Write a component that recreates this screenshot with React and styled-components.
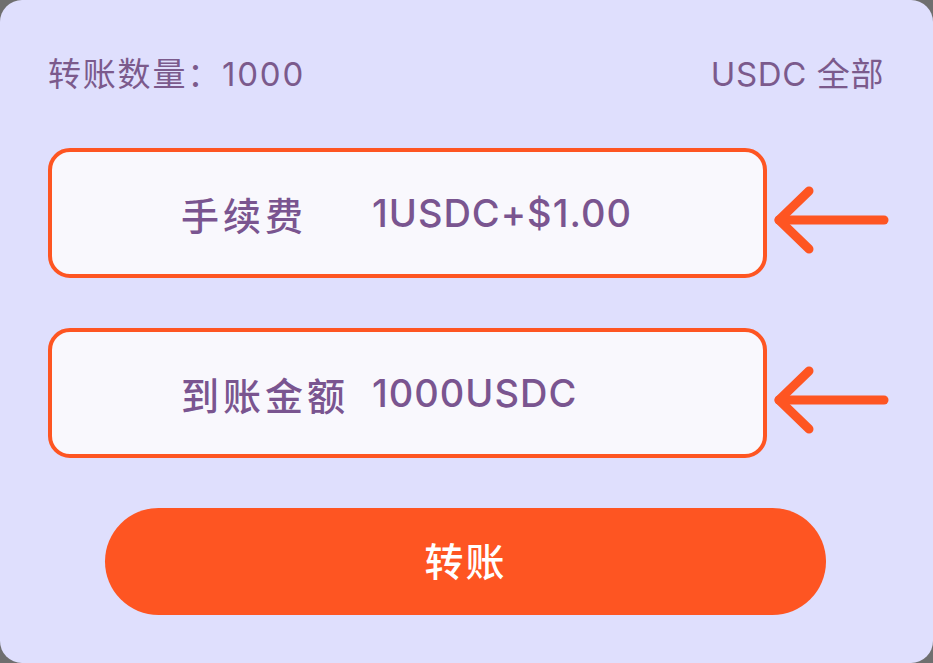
import React from "react";
import styled, { createGlobalStyle } from "styled-components";

const Global = createGlobalStyle`
  html, body { margin: 0; padding: 0; background: #6f6f6f; }
  body { font-family: "Inter", "Noto Sans CJK SC", sans-serif; }
`;

const Card = styled.div`
  box-sizing: border-box;
  width: 933px;
  height: 663px;
  background: #dfdffd;
  border-radius: 22px;
  padding: 50px 49px 0 48px;
  display: flex;
  flex-direction: column;
`;

const TopRow = styled.div`
  display: flex;
  justify-content: space-between;
  align-items: center;
  height: 44px;
  font-size: 33px;
  color: #7b5a8c;
  margin-bottom: 54px;
`;

const TopText = styled.span`
  letter-spacing: ${(p) => p.$spacing}px;
`;

const Rows = styled.div`
  display: flex;
  flex-direction: column;
  gap: 50px;
`;

const Row = styled.div`
  display: flex;
  align-items: center;
`;

const Box = styled.div`
  box-sizing: border-box;
  flex-shrink: 0;
  width: 719px;
  height: 130px;
  border: 4px solid #fe5522;
  border-radius: 22px;
  background: #f9f8fd;
  display: flex;
  align-items: center;
  padding-left: 129px;
  color: #7a5590;
  font-weight: 500;
`;

const Label = styled.span`
  width: 191px;
  flex-shrink: 0;
  font-size: 38px;
  letter-spacing: 4px;
`;

const Value = styled.span`
  font-size: 38px;
  letter-spacing: 1px;
`;

const Arrow = styled.svg`
  flex-shrink: 0;
  overflow: visible;
  margin-top: 14px;
`;

const Button = styled.button`
  align-self: center;
  margin: 50px 0 0 -1px;
  padding: 0 0 5px;
  width: 721px;
  height: 107px;
  border: none;
  border-radius: 54px;
  background: #fe5522;
  color: #fff;
  font-family: "Noto Sans CJK SC", sans-serif;
  font-size: 39px;
  font-weight: 500;
  letter-spacing: 2px;
  cursor: pointer;
`;

const ArrowIcon = () => (
  <Arrow width="117" height="70" viewBox="0 0 117 70">
    <g stroke="#fe5522" strokeWidth="9" strokeLinecap="round" strokeLinejoin="round" fill="none">
      <path d="M12 35 H117" />
      <path d="M42 6 L12 35 L42 64" />
    </g>
  </Arrow>
);

export default function App() {
  return (
    <>
      <Global />
      <Card>
        <TopRow>
          <TopText $spacing={1.8}>转账数量：1000</TopText>
          <TopText $spacing={0.6}>USDC 全部</TopText>
        </TopRow>
        <Rows>
          <Row>
            <Box>
              <Label>手续费</Label>
              <Value>1USDC+$1.00</Value>
            </Box>
            <ArrowIcon />
          </Row>
          <Row>
            <Box>
              <Label>到账金额</Label>
              <Value>1000USDC</Value>
            </Box>
            <ArrowIcon />
          </Row>
        </Rows>
        <Button>转账</Button>
      </Card>
    </>
  );
}
